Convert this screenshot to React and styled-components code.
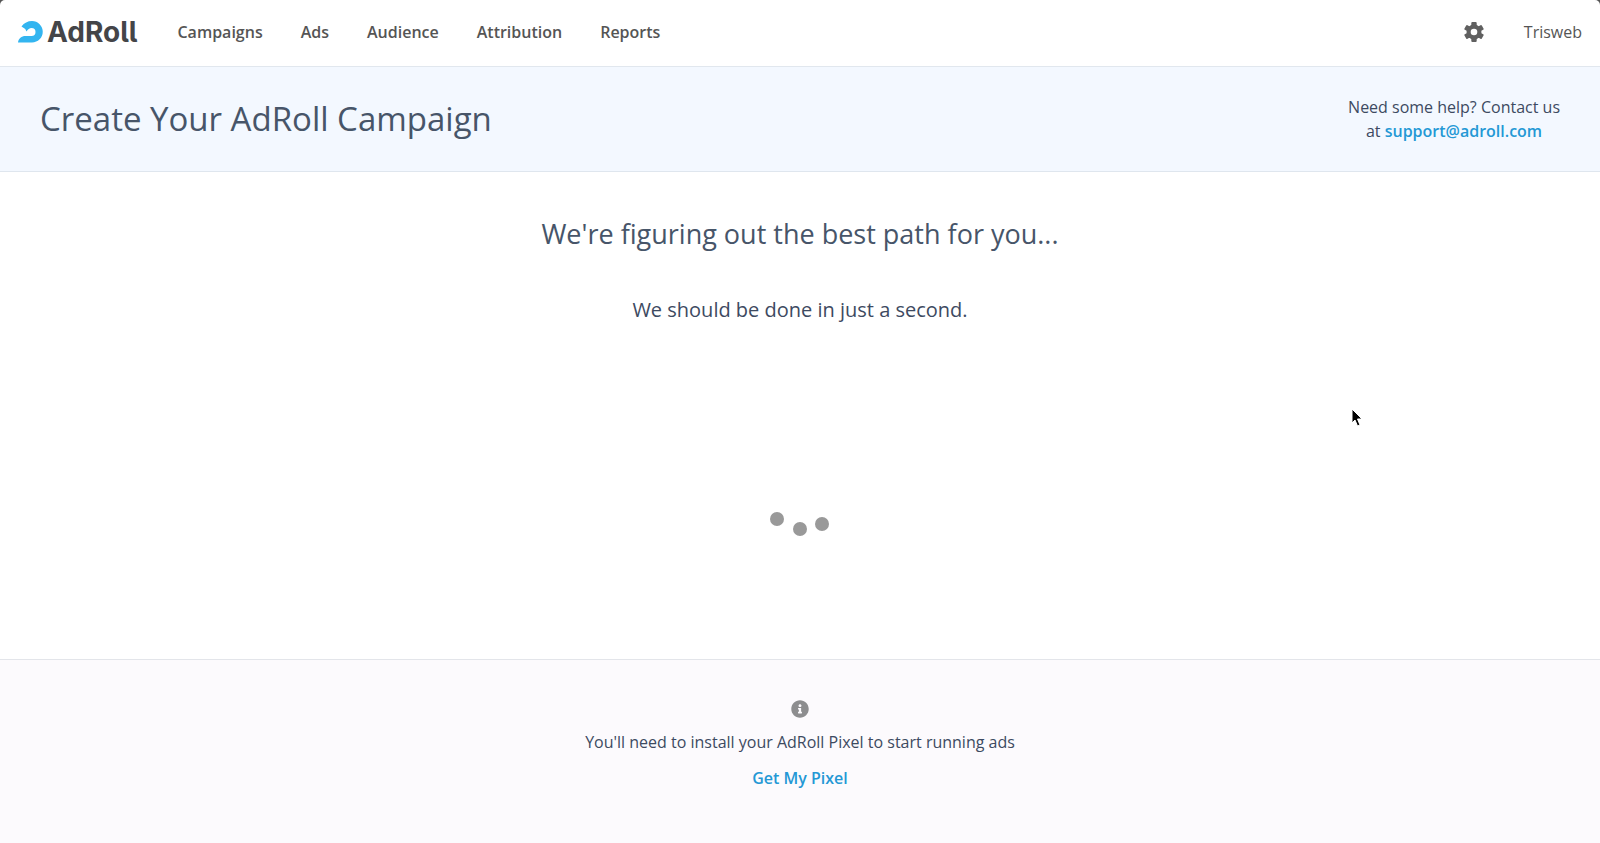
import React from 'react'
import styled, { createGlobalStyle } from 'styled-components'
import { FaInfoCircle } from 'react-icons/fa'

function App() {
  return (
    <>
      <GlobalStyle />
      <Page>
        <Header />
        <Banner>
          <Title>Create Your AdRoll Campaign</Title>
          <Help>
            Need some help? Contact us<br />
            at <Link href="mailto:support@adroll.com">support@adroll.com</Link>
          </Help>
        </Banner>
        <Main>
          <Heading>We're figuring out the best path for you...</Heading>
          <SubHeading>We should be done in just a second.</SubHeading>
          <Loader />
        </Main>
        <Footer>
          <InfoIcon />
          <p>You'll need to install your AdRoll Pixel to start running ads</p>
          <Link href="#">Get My Pixel</Link>
        </Footer>
        <Pointer />
      </Page>
    </>
  )
}

export default App

function Header() {
  return (
    <Container>
      <Logo href="#">
        <svg width="25" height="22" viewBox="0 0 25 22" aria-hidden="true">
          <path
            fill="#33b5f0"
            d="M3.500 5.500Q7.500 0 14 0A10.750 10.750 0 0 1 14 21.500H0C.5 17.500 3.500 15 7.500 15H13.500A4 4 0 0 0 13.500 7Q10.500 7 8.500 10.500Q7 7 3.500 5.500Z"
          />
        </svg>
        <span>AdRoll</span>
      </Logo>
      <Menu>
        <a href="#">Campaigns</a>
        <a href="#">Ads</a>
        <a href="#">Audience</a>
        <a href="#">Attribution</a>
        <a href="#">Reports</a>
      </Menu>
      <RightMenu>
        <SettingsButton aria-label="Settings">
          <Gear />
        </SettingsButton>
        <a href="#">Trisweb</a>
      </RightMenu>
    </Container>
  )
}

function Gear() {
  return (
    <svg width="20" height="20" viewBox="0 0 20 20" aria-hidden="true">
      <g fill="#606060">
        <rect x="7.300" y="0" width="5.400" height="20" rx="1" />
        <rect x="7.300" y="0" width="5.400" height="20" rx="1" transform="rotate(60 10 10)" />
        <rect x="7.300" y="0" width="5.400" height="20" rx="1" transform="rotate(120 10 10)" />
        <circle cx="10" cy="10" r="7.500" />
      </g>
      <circle cx="10" cy="10" r="3.300" fill="#fff" />
    </svg>
  )
}

function Loader() {
  return (
    <Dots width="60" height="26" viewBox="0 0 60 26" role="img" aria-label="Loading">
      <circle cx="7" cy="8" r="7" />
      <circle cx="30" cy="18" r="7" />
      <circle cx="52" cy="13" r="7" />
    </Dots>
  )
}

function Pointer() {
  return (
    <Cursor width="14" height="20" viewBox="0 0 14 20" aria-hidden="true">
      <path d="M2 1V15L5 12L7.500 18L10 17L7.500 11H12Z" fill="#000" stroke="#fff" />
    </Cursor>
  )
}

const GlobalStyle = createGlobalStyle`
  *{
    box-sizing: border-box;
  }
  body{
    margin: 0;
    background-color: #555;
    color: #3d4a61;
    font-family: 'Open Sans', sans-serif;
    font-size: 16px;
    line-height: 24px;
  }
  h1, h2, p{
    margin: 0;
    font-weight: 400;
  }
  a{
    color: inherit;
    text-decoration: none;
  }
`

const Page = styled.div`
  min-height: 100vh;
  display: flex;
  flex-direction: column;
  overflow: hidden;
  border-radius: 5px 5px 0 0;
  background-color: white;
`

const Container = styled.header`
  height: 67px;
  display: flex;
  align-items: center;
  padding: 0 18px 2px;
  border-bottom: 1px solid #e1e7ee;
  color: #555;
`

const Logo = styled.a`
  display: flex;
  align-items: center;
  gap: 4px;
  color: #444548;
  font-family: Inter, sans-serif;
  font-size: 28px;
  font-weight: 700;
  font-feature-settings: 'cv05';
`

const Menu = styled.nav`
  display: flex;
  flex: 1;
  gap: 38px;
  margin-left: 40px;
  font-weight: 600;
`

const RightMenu = styled.div`
  display: flex;
  align-items: center;
  gap: 40px;
`

const SettingsButton = styled.button`
  display: flex;
  padding: 0;
  border: 0;
  background: none;
  cursor: pointer;
`

const Banner = styled.section`
  display: flex;
  align-items: center;
  justify-content: space-between;
  padding: 28px 40px;
  border-bottom: 1px solid #dfe6ee;
  background-color: #f3f8ff;
`

const Title = styled.h1`
  color: #475569;
  font-size: 33px;
  line-height: 48px;
`

const Help = styled.p`
  text-align: center;
`

const Link = styled.a`
  color: #2498d5;
  font-weight: 600;
`

const Main = styled.main`
  flex: 1;
  display: flex;
  flex-direction: column;
  align-items: center;
  padding-top: 42px;
`

const Heading = styled.h2`
  color: #475569;
  font-size: 27px;
  line-height: 40px;
`

const SubHeading = styled.p`
  margin-top: 40px;
  font-size: 20px;
  line-height: 32px;
`

const Dots = styled.svg`
  margin-top: 185px;
  fill: #999;
`

const Footer = styled.footer`
  display: flex;
  flex-direction: column;
  align-items: center;
  gap: 12px;
  padding: 40px 20px 53px;
  border-top: 1px solid #e3e5ea;
  background-color: #fcfafd;
`

const InfoIcon = styled(FaInfoCircle)`
  color: #8d8d8f;
  font-size: 18px;
`

const Cursor = styled.svg`
  position: absolute;
  top: 408px;
  left: 1350px;
`
